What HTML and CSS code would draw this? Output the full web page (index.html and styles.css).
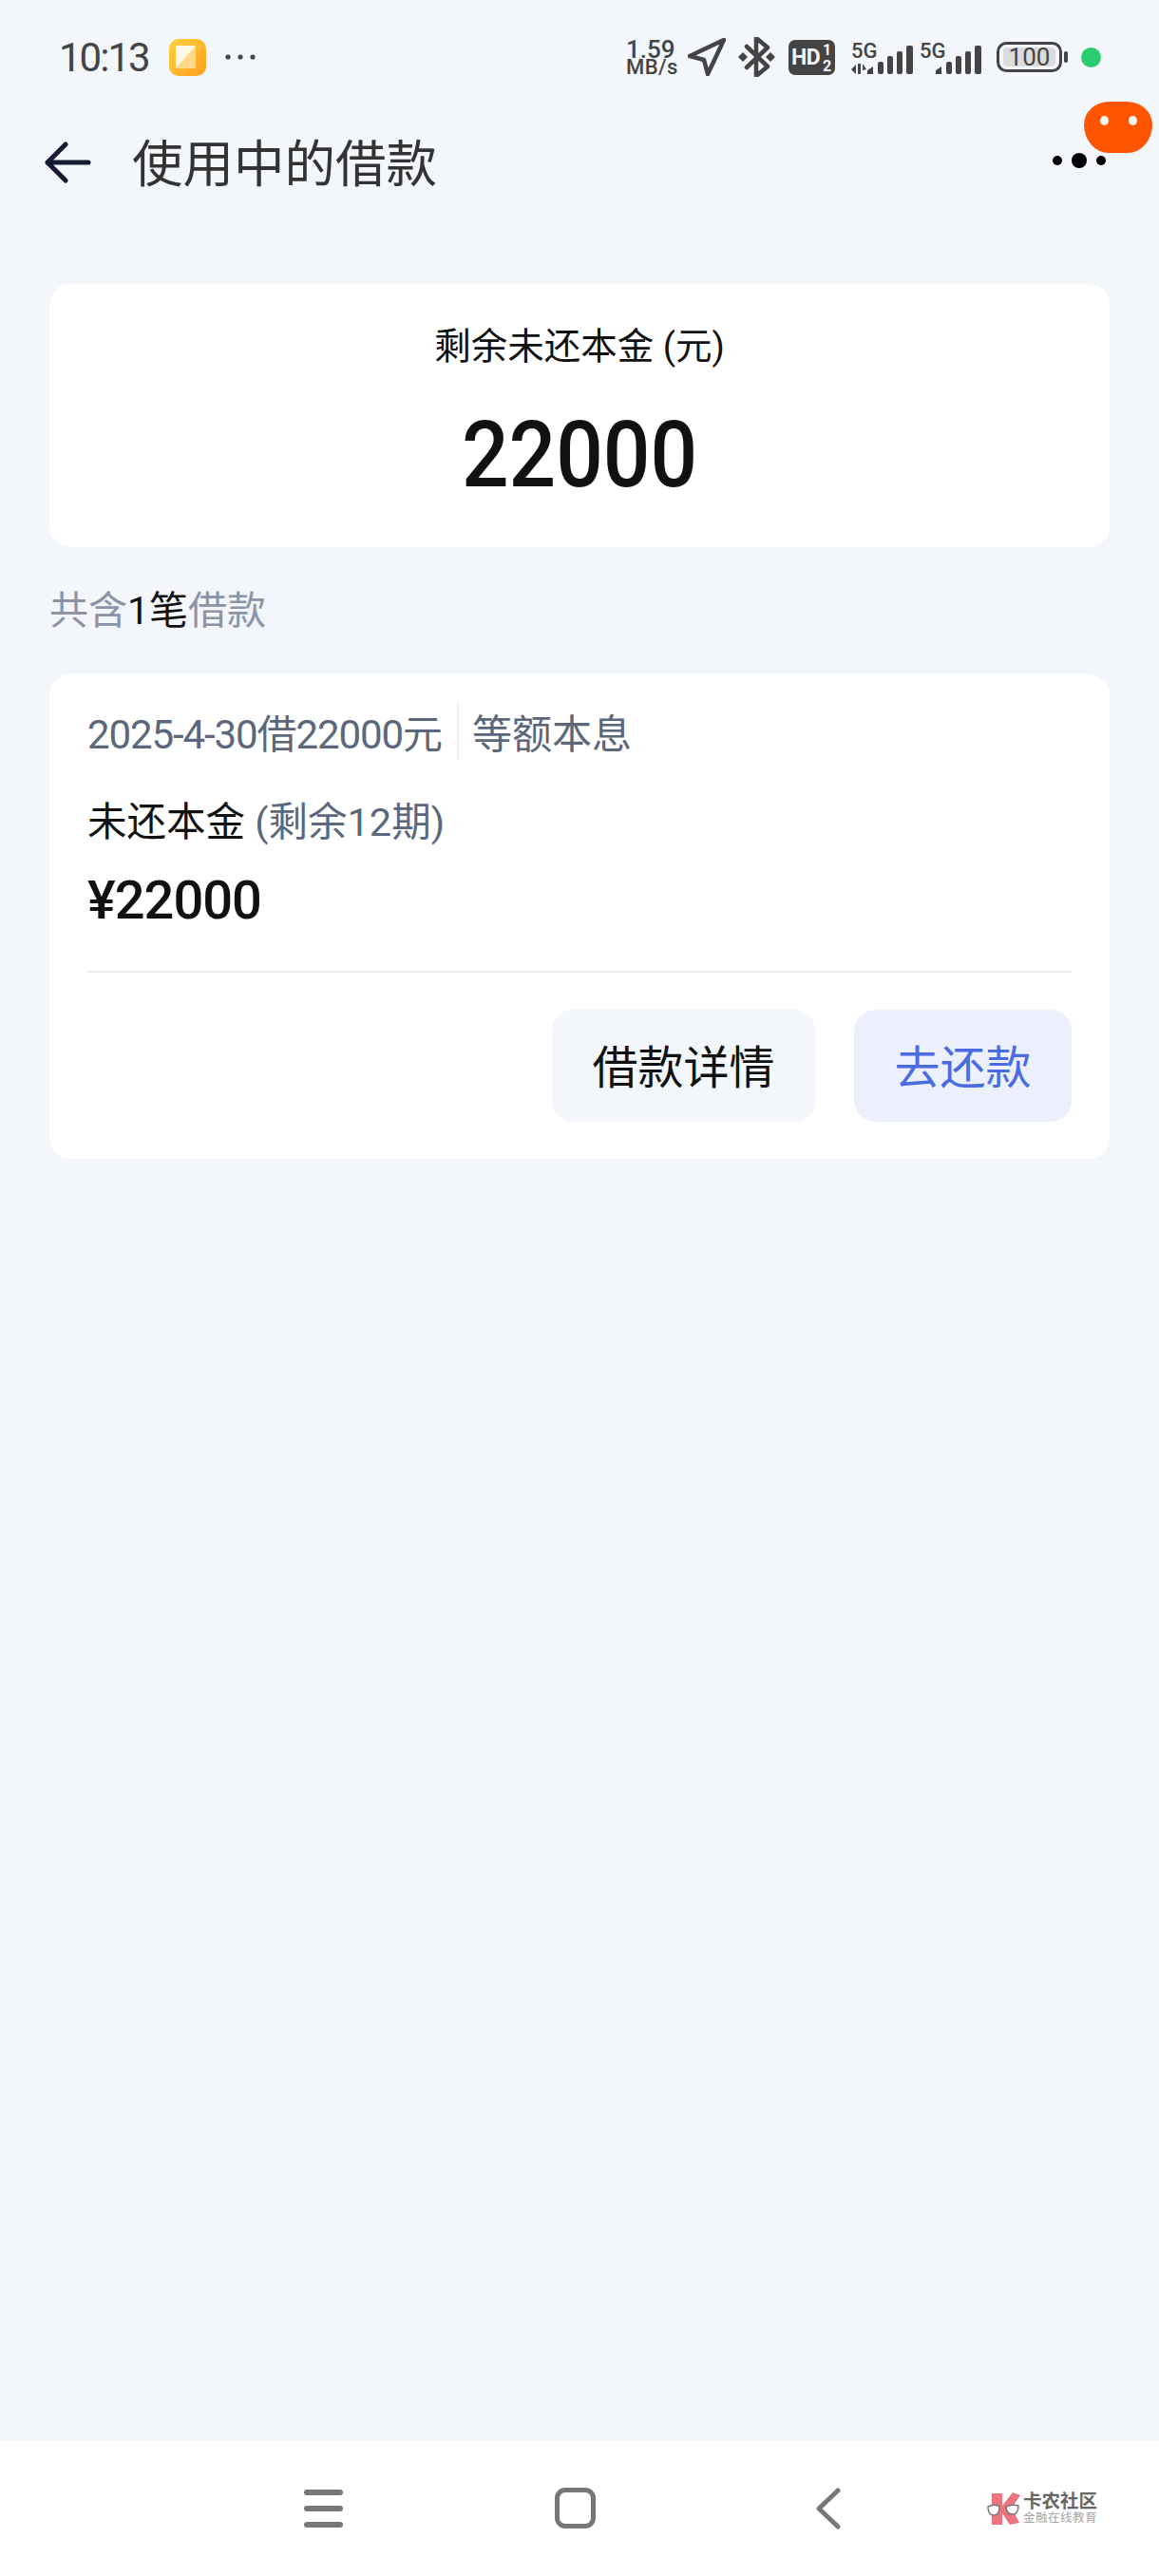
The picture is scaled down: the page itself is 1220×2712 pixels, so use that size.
FILE: index.html
```html
<!DOCTYPE html>
<html lang="zh-CN">
<head>
  <meta charset="UTF-8">
  <title>使用中的借款</title>
  <link rel="stylesheet" href="styles.css">
</head>
<body>

  <div class="status">
    <div class="status-left">
      <span class="time">10:13</span>
      <svg class="app-icon" width="39" height="39" viewBox="0 0 39 39">
        <defs>
          <linearGradient id="appGrad" x1="0" y1="0" x2="1" y2="1">
            <stop offset="0" stop-color="#ffd23f"/>
            <stop offset="1" stop-color="#ff9f1c"/>
          </linearGradient>
        </defs>
        <rect width="39" height="39" rx="10" fill="url(#appGrad)"/>
        <rect x="7" y="7" width="21" height="24" rx="1" fill="#ffd98a"/>
        <path d="M7 31V7h21z" fill="#fff8e8"/>
      </svg>
      <svg class="more-dots" width="32" height="6" viewBox="0 0 32 6">
        <circle cx="3" cy="3" r="2.6"/><circle cx="16" cy="3" r="2.6"/><circle cx="29" cy="3" r="2.6"/>
      </svg>
    </div>
    <div class="status-right">
      <div class="speed"><span class="speed-num">1.59</span><span class="speed-unit">MB/s</span></div>
      <svg class="ic-nav" width="40" height="40" viewBox="0 0 40 40">
        <path d="M38 2 2 19l15 4 4 15z" fill="none" stroke="#444" stroke-width="4.5" stroke-linejoin="round"/>
      </svg>
      <svg class="ic-bt" width="39" height="42" viewBox="0 0 39 42">
        <path d="M9 10 31 31 19 41V1l12 10L9 32" fill="none" stroke="#444" stroke-width="4.5" stroke-linejoin="round" stroke-linecap="round"/>
        <path d="M5 16l5 5-5 5-5-5zM34 16l5 5-5 5-5-5z" fill="#444"/>
      </svg>
      <svg class="ic-hd" width="49" height="37" viewBox="0 0 49 37">
        <rect width="49" height="37" rx="7" fill="#444"/>
        <text x="3" y="26" class="hd-text">HD</text>
        <text x="36" y="16" class="hd-small">1</text>
        <text x="36" y="33" class="hd-small">2</text>
      </svg>
      <svg class="ic-sig1" width="65" height="40" viewBox="0 -4 65 40">
        <text x="0" y="17" class="sig-text">5G</text>
        <path d="M0 29l5-5v10zM7 23v11h3V23zM12 23l4 6-4 1z" fill="#444"/>
        <path d="M17 34v-4l6-4v8z" fill="#444"/>
        <rect x="28" y="21" width="6" height="13" rx="2" fill="#444"/>
        <rect x="38" y="15" width="6" height="19" rx="2" fill="#444"/>
        <rect x="48" y="10" width="6" height="24" rx="2" fill="#444"/>
        <rect x="58" y="4" width="7" height="30" rx="2" fill="#444"/>
      </svg>
      <svg class="ic-sig2" width="65" height="40" viewBox="0 -4 65 40">
        <text x="0" y="17" class="sig-text">5G</text>
        <path d="M17 34v-4l6-4v8z" fill="#444"/>
        <rect x="28" y="21" width="6" height="13" rx="2" fill="#444"/>
        <rect x="38" y="15" width="6" height="19" rx="2" fill="#444"/>
        <rect x="48" y="10" width="6" height="24" rx="2" fill="#444"/>
        <rect x="58" y="4" width="7" height="30" rx="2" fill="#444"/>
      </svg>
      <svg class="ic-batt" width="75" height="32" viewBox="0 0 75 32">
        <rect x="1.5" y="1.5" width="66" height="29" rx="9" fill="none" stroke="#444" stroke-width="3"/>
        <rect x="7" y="6" width="55" height="20" rx="4" fill="#dcdcdc"/>
        <text x="34.5" y="25" class="batt-text">100</text>
        <rect x="71" y="10" width="4" height="12" rx="2" fill="#444"/>
      </svg>
      <span class="green-dot"></span>
    </div>
  </div>

  <div class="topbar">
    <svg class="back" width="49" height="44" viewBox="0 0 49 44">
      <path d="M22 3 3 22l19 19M3 22h43" fill="none" stroke="#131c30" stroke-width="5" stroke-linecap="round" stroke-linejoin="round"/>
    </svg>
    <h1 class="title">使用中的借款</h1>
    <svg class="menu" width="56" height="16" viewBox="0 0 56 16">
      <circle cx="5" cy="8" r="5"/><circle cx="28" cy="8" r="8"/><circle cx="51" cy="8" r="5"/>
    </svg>
    <div class="float-blob"><span class="eye"></span><span class="eye"></span></div>
  </div>

  <main class="content">
    <section class="card summary">
      <div class="summary-label">剩余未还本金 (元)</div>
      <div class="summary-amount">22000</div>
    </section>

    <div class="count">共含<em>1笔</em>借款</div>

    <section class="card loan">
      <div class="loan-meta">
        <span class="loan-date">2025-4-30借22000元</span>
        <span class="loan-type">等额本息</span>
      </div>
      <div class="loan-label">未还本金 <span class="muted">(剩余12期)</span></div>
      <div class="loan-amount">¥22000</div>
      <div class="loan-actions">
        <button class="btn btn-grey">借款详情</button>
        <button class="btn btn-blue">去还款</button>
      </div>
    </section>
  </main>

  <nav class="navbar">
    <div class="nav-menu"><span></span><span></span><span></span></div>
    <div class="nav-home"></div>
    <svg class="nav-back" width="27" height="44" viewBox="0 0 27 44">
      <path d="M24 3 4 22l20 19" fill="none" stroke="#777" stroke-width="5" stroke-linecap="round" stroke-linejoin="round"/>
    </svg>
    <div class="watermark">
      <svg width="36" height="34" viewBox="0 0 36 34">
        <path d="M5 1h11v13L27 0l8 3-9 13 8 16-10 2-8-12v12H5z" fill="#ee7380"/>
        <path d="M1 15c4-2 9-2 12 0 0 5-2 9-6 9-4 0-6-4-6-9zM20 15c4-2 9-2 13-1 0 5-2 9-6 9-5 0-7-3-7-8z" fill="#fff" stroke="#777" stroke-width="1.5"/>
      </svg>
      <div class="wm-text">
        <span class="wm-name">卡农社区</span>
        <span class="wm-sub">金融在线教育</span>
      </div>
    </div>
  </nav>

</body>
</html>
```

FILE: styles.css
```css
* {
  box-sizing: border-box;
}
body {
  margin: 0;
  width: 1220px;
  height: 2712px;
  display: flex;
  flex-direction: column;
  background-color: #f3f6fb;
  font-family: Roboto, "Noto Sans CJK SC", sans-serif;
  color: #111;
}

/* status bar */
.status {
  height: 120px;
  padding: 0 61px 0 62px;
  display: flex;
  align-items: center;
  justify-content: space-between;
}
.status-left,
.status-right {
  display: flex;
  align-items: center;
}
.time {
  font-size: 42px;
  letter-spacing: -2px;
  color: #444;
  width: 94px;
  white-space: nowrap;
}
.app-icon {
  margin-left: 22px;
}
.more-dots {
  margin-left: 20px;
  fill: #444;
}
.speed {
  display: flex;
  flex-direction: column;
  color: #444;
  font-weight: 500;
  width: 55px;
}
.speed-num {
  font-size: 26px;
  line-height: 20px;
}
.speed-unit {
  font-size: 22px;
  line-height: 17px;
  letter-spacing: 0.4px;
}
.ic-nav {
  margin-left: 10px;
}
.ic-bt {
  margin-left: 13px;
}
.ic-hd {
  margin-left: 14px;
}
.hd-text {
  font-size: 23px;
  font-weight: 700;
  fill: #f3f6fb;
  letter-spacing: -0.5px;
}
.hd-small {
  font-size: 16px;
  font-weight: 700;
  fill: #f3f6fb;
}
.ic-sig1 {
  margin-left: 17px;
}
.ic-sig2 {
  margin-left: 7px;
}
.sig-text {
  font-size: 22px;
  font-weight: 500;
  fill: #444;
}
.ic-batt {
  margin-left: 16px;
}
.batt-text {
  font-size: 26px;
  fill: #444;
  text-anchor: middle;
}
.green-dot {
  margin-left: 14px;
  width: 21px;
  height: 21px;
  border-radius: 50%;
  background-color: #2ecc71;
}

/* title row */
.topbar {
  position: relative;
  height: 102px;
  padding: 0 56px 0 47px;
  display: flex;
  align-items: center;
}
.title {
  margin: -6px 0 0 43px;
  flex: 1;
  font-size: 53.5px;
  font-weight: 400;
  color: #333;
}
.menu {
  fill: #000;
  margin-top: -4px;
}
.float-blob {
  position: absolute;
  left: 1141px;
  top: -13px;
  width: 72px;
  height: 54px;
  padding-top: 15px;
  display: flex;
  justify-content: center;
  gap: 21px;
  background-color: #ff5500;
  border-radius: 27px 27px 26px 26px / 24px 24px 30px 30px;
}
.eye {
  width: 9px;
  height: 10px;
  border-radius: 50%;
  background-color: #fff6ea;
}

/* cards */
.content {
  flex: 1;
  padding: 77px 52px 0 52px;
}
.card {
  background-color: #fff;
  border-radius: 22px;
}
.summary {
  height: 277px;
  padding-top: 40px;
  text-align: center;
}
.summary-label {
  font-size: 38.5px;
  line-height: 52px;
  color: #111;
}
.summary-amount {
  margin-top: 32px;
  font-size: 97px;
  font-weight: 500;
  line-height: 112px;
  color: #111;
  transform: scaleX(0.9);
}
.count {
  margin-top: 42px;
  font-size: 41px;
  line-height: 50px;
  color: #8b95a7;
}
.count em {
  font-style: normal;
  color: #111;
}
.loan {
  margin-top: 42px;
  height: 510px;
  padding: 35px 40px 0;
}
.loan-meta {
  display: flex;
  align-items: center;
  height: 49px;
  color: #5b677b;
}
.loan-date {
  font-size: 42px;
  letter-spacing: -1.1px;
  padding-right: 16px;
  border-right: 2px solid #eceef2;
  white-space: nowrap;
}
.loan-type {
  font-size: 42px;
  margin-left: 14px;
}
.loan-label {
  margin-top: 43px;
  font-size: 41.5px;
  line-height: 58px;
  white-space: nowrap;
}
.muted {
  color: #5b677b;
}
.loan-amount {
  margin-top: 17px;
  font-size: 56px;
  font-weight: 500;
  line-height: 72px;
  letter-spacing: -1px;
}
.loan-actions {
  margin-top: 38px;
  padding-top: 39px;
  border-top: 2px solid #e8eaee;
  display: flex;
  justify-content: flex-end;
  gap: 41px;
}
.btn {
  height: 118px;
  border: none;
  border-radius: 22px;
  font-family: inherit;
  font-size: 48px;
  padding: 0 0 5px;
}
.btn-grey {
  width: 277px;
  background-color: #f3f6fb;
  color: #111;
}
.btn-blue {
  width: 229px;
  background-color: #ebf0fc;
  color: #4a6ce0;
}

/* bottom nav */
.navbar {
  height: 143px;
  background-color: #fff;
  padding-left: 320px;
  display: flex;
  align-items: center;
}
.nav-menu {
  width: 41px;
  display: flex;
  flex-direction: column;
  gap: 11px;
}
.nav-menu span {
  height: 6px;
  border-radius: 3px;
  background-color: #777;
}
.nav-home {
  margin-left: 223px;
  width: 43px;
  height: 43px;
  border: 5px solid #777;
  border-radius: 11px;
}
.nav-back {
  margin-left: 231px;
}
.watermark {
  margin-left: 154px;
  display: flex;
  align-items: center;
  gap: 2px;
}
.wm-text {
  display: flex;
  flex-direction: column;
  width: 80px;
}
.wm-name {
  font-size: 19.5px;
  line-height: 21px;
  font-weight: 700;
  color: #666;
  white-space: nowrap;
}
.wm-sub {
  font-size: 12.5px;
  line-height: 14px;
  letter-spacing: 0.5px;
  color: #a5a5a5;
  white-space: nowrap;
}
```
